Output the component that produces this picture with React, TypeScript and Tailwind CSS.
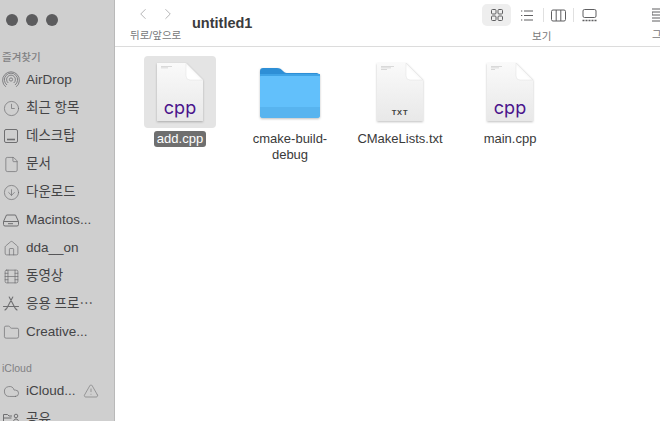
import { ChevronLeft, ChevronRight, Clock3, Cloud, File, Folder, House, TriangleAlert, CircleArrowDown, Film, type LucideIcon } from 'lucide-react';
import type { ReactNode } from 'react';

const font = { fontFamily: '"Liberation Sans", "Noto Sans CJK KR", sans-serif' };

function AirDropIcon() {
  return (
    <svg width="18" height="18" viewBox="0 0 18 18" fill="none" stroke="#77777a" strokeWidth="0.9">
      <circle cx="9" cy="8.5" r="1.6" />
      <path d="M6.3 12a4.4 4.4 0 1 1 5.4 0" />
      <path d="M5 14a6.6 6.6 0 1 1 8 0" />
      <path d="M3.8 15.8a8.4 8.4 0 1 1 10.4 0" />
    </svg>
  );
}

function DesktopIcon() {
  return (
    <svg width="18" height="18" viewBox="0 0 18 18" fill="none" stroke="#6f6f71" strokeWidth="1">
      <rect x="2.5" y="2.5" width="13" height="13" rx="1.5" />
      <path d="M5 12.5h8" strokeWidth="1.6" />
    </svg>
  );
}

function DiskIcon() {
  return (
    <svg width="18" height="18" viewBox="0 0 18 18" fill="none" stroke="#6f6f71" strokeWidth="1">
      <path d="M1.5 10.5 4.5 4h9l3 6.5v3a1.5 1.5 0 0 1-1.5 1.5H3a1.5 1.5 0 0 1-1.5-1.5z" />
      <path d="M1.5 10.5h15M6 12.7h5" />
    </svg>
  );
}

function AppsIcon() {
  return (
    <svg width="18" height="18" viewBox="0 0 18 18" fill="none" stroke="#6f6f71" strokeWidth="1.1" strokeLinecap="round">
      <path d="M10.8 2 4.4 14M7.2 2l6.4 12M1.5 11.5h15M3 15l1-1M15 15l-1-1" />
    </svg>
  );
}

function SharedIcon() {
  return (
    <svg width="18" height="18" viewBox="0 0 18 18" fill="none" stroke="#6f6f71" strokeWidth="1">
      <path d="M1.5 15V4.5h4l1.5 1.5h3M1.5 8h8M1.5 15h9" />
      <circle cx="14" cy="6" r="1.8" />
      <path d="M11.5 12c0-2 1-3 2.5-3s2.5 1 2.5 3z" />
    </svg>
  );
}

function lucide(Icon: LucideIcon) {
  return <Icon size={17} strokeWidth={1} color="#6f6f71" />;
}

function SidebarRow({ icon, label, trailing }: { icon: ReactNode; label: string; trailing?: ReactNode }) {
  return (
    <div className="flex h-7 shrink-0 items-center pl-[2px]">
      <span className="flex w-[18px] shrink-0 justify-center">{icon}</span>
      <span className="ml-[6px] whitespace-nowrap text-[13.5px] text-[#444446]">{label}</span>
      {trailing}
    </div>
  );
}

function Sidebar() {
  return (
    <aside className="flex h-[421px] w-[115px] shrink-0 flex-col overflow-hidden border-r border-[#b9b9b9] bg-[#cfcfcf]">
      <div className="flex shrink-0 gap-[8px] pl-[6px] pt-[14px]">
        <span className="h-3 w-3 rounded-full bg-[#5c5c5e]" />
        <span className="h-3 w-3 rounded-full bg-[#5c5c5e]" />
        <span className="h-3 w-3 rounded-full bg-[#5c5c5e]" />
      </div>
      <p className="mt-[24px] shrink-0 pl-[2px] text-[10.5px] leading-[14px] font-medium text-[#818183]">즐겨찾기</p>
      <div className="mt-[2px] flex shrink-0 flex-col">
        <SidebarRow icon={<AirDropIcon />} label="AirDrop" />
        <SidebarRow icon={lucide(Clock3)} label="최근 항목" />
        <SidebarRow icon={<DesktopIcon />} label="데스크탑" />
        <SidebarRow icon={lucide(File)} label="문서" />
        <SidebarRow icon={lucide(CircleArrowDown)} label="다운로드" />
        <SidebarRow icon={<DiskIcon />} label="Macintos..." />
        <SidebarRow icon={lucide(House)} label="dda__on" />
        <SidebarRow icon={lucide(Film)} label="동영상" />
        <SidebarRow icon={<AppsIcon />} label="응용 프로⋯" />
        <SidebarRow icon={lucide(Folder)} label="Creative..." />
      </div>
      <p className="mt-[15px] shrink-0 pl-[2px] text-[10.5px] leading-[14px] font-medium text-[#818183]">iCloud</p>
      <div className="mt-[2px] flex shrink-0 flex-col">
        <SidebarRow
          icon={lucide(Cloud)}
          label="iCloud..."
          trailing={
            <span className="ml-[7px]">
              <TriangleAlert size={16} strokeWidth={0.9} color="#6f6f71" />
            </span>
          }
        />
        <SidebarRow icon={<SharedIcon />} label="공유" />
      </div>
    </aside>
  );
}

function ViewButtons() {
  return (
    <div className="flex items-center">
      <span className="flex h-[22px] w-[29px] shrink-0 items-center justify-center rounded-[5px] bg-[#eeeeee]">
        <svg width="14" height="14" viewBox="0 0 14 14" fill="none" stroke="#5f5f61" strokeWidth="1">
          <rect x="1.5" y="1.5" width="4.5" height="4.5" rx="1" />
          <rect x="8" y="1.5" width="4.5" height="4.5" rx="1" />
          <rect x="1.5" y="8" width="4.5" height="4.5" rx="1" />
          <rect x="8" y="8" width="4.5" height="4.5" rx="1" />
        </svg>
      </span>
      <span className="ml-[10px] flex w-[12px] shrink-0 justify-center">
        <svg width="12" height="11" viewBox="0 0 12 11" fill="none" stroke="#5f5f61" strokeWidth="1">
          <path d="M3 1H12M3 5.5H12M3 10H12M0 1h1.3M0 5.5h1.3M0 10h1.3" />
        </svg>
      </span>
      <span className="ml-[10px] h-[14px] w-px shrink-0 bg-[#e0e0e0]" />
      <span className="ml-[7px] flex shrink-0">
        <svg width="15" height="13" viewBox="0 0 15 13" fill="none" stroke="#5f5f61" strokeWidth="1">
          <rect x="0.5" y="1" width="14" height="11" rx="1.5" />
          <path d="M5.2 1v11M9.8 1v11" />
        </svg>
      </span>
      <span className="ml-[7px] h-[14px] w-px shrink-0 bg-[#e0e0e0]" />
      <span className="ml-[8px] flex shrink-0">
        <svg width="15" height="13" viewBox="0 0 15 13" fill="none" stroke="#5f5f61" strokeWidth="1">
          <rect x="1" y="0.5" width="13" height="8" rx="1.5" />
          <path d="M0.5 11.5h14" strokeWidth="1.4" strokeDasharray="2 1" />
        </svg>
      </span>
    </div>
  );
}

function Toolbar() {
  return (
    <header className="flex h-[47px] shrink-0 border-b border-[#dcdcdc] bg-white">
      <div className="ml-[15px] flex w-[62px] shrink-0 flex-col">
        <div className="mt-[5px] flex h-[18px] items-center pl-[4px]">
          <ChevronLeft size={18} strokeWidth={1} color="#9c9c9e" />
          <ChevronRight size={18} strokeWidth={1} color="#9c9c9e" className="ml-[7px]" />
        </div>
        <span className="mt-[5px] whitespace-nowrap text-[10.5px] leading-[14px] text-[#777779]">뒤로/앞으로</span>
      </div>
      <h1 className="w-[60px] shrink-0 pt-[14px] text-[14.5px] leading-[18px] font-bold text-[#3b3b3d]">untitled1</h1>
      <div className="ml-[230px] flex w-[120px] shrink-0 flex-col pt-[4px]">
        <ViewButtons />
        <span className="mt-[3px] pl-[50px] text-[10.5px] leading-[14px] text-[#777779]">보기</span>
      </div>
      <div className="ml-[50px] flex shrink-0 flex-col pt-[8px]">
        <svg width="14" height="14" viewBox="0 0 14 14" fill="none" stroke="#5f5f61" strokeWidth="1" className="shrink-0">
          <path d="M0 1h14M0 4h14v3H0zM0 10h14M0 13h14" />
        </svg>
        <span className="mt-[5px] text-[10.5px] leading-[14px] text-[#777779]">그</span>
      </div>
    </header>
  );
}

function DocIcon({ lines }: { lines: number[] }) {
  return (
    <svg width="48" height="60" viewBox="0 0 48 60" className="drop-shadow-[0_1px_1px_rgba(0,0,0,0.25)]">
      <defs>
        <linearGradient id="page" x1="0" y1="0" x2="0" y2="1">
          <stop offset="0" stopColor="#fafafa" />
          <stop offset="1" stopColor="#e8e8e8" />
        </linearGradient>
        <linearGradient id="fold" x1="0" y1="1" x2="1" y2="0">
          <stop offset="0.4" stopColor="#ffffff" />
          <stop offset="1" stopColor="#d2d2d2" />
        </linearGradient>
      </defs>
      <path d="M1 1h29l17 17v41H1z" fill="url(#page)" />
      <path d="M30 1l17 17H34a4 4 0 0 1-4-4z" fill="url(#fold)" stroke="#d8d8d8" strokeWidth="0.4" />
      {lines.map((w, i) => (
        <rect key={i} x="5" y={4 + i * 1.6} width={w} height="0.6" fill="#c4c4c4" />
      ))}
    </svg>
  );
}

function FileItem({ kind, name, selected, lines }: { kind: 'cpp' | 'txt'; name: string; selected?: boolean; lines: number[] }) {
  return (
    <div className="flex w-[110px] shrink-0 flex-col items-center">
      <div className={`relative flex h-[72px] w-[72px] items-center justify-center rounded-[4px] ${selected ? 'bg-[#e4e4e4]' : ''}`}>
        <DocIcon lines={lines} />
        {kind === 'cpp' ? (
          <span className="absolute left-0 right-0 top-[42px] text-center text-[18px] leading-[20px] font-normal text-[#4a148c]" style={{ fontFamily: '"Inter", sans-serif' }}>cpp</span>
        ) : (
          <span className="absolute left-0 right-0 top-[52px] text-center text-[7.5px] leading-[10px] font-bold tracking-[0.8px] text-[#3f3f3f]">TXT</span>
        )}
      </div>
      <span className={`mt-[3px] rounded-[3px] px-[3px] text-center text-[13px] leading-[16px] ${selected ? 'bg-[#6f6f6f] text-white' : 'text-[#3a3a3a]'}`}>{name}</span>
    </div>
  );
}

function FolderItem() {
  return (
    <div className="flex w-[110px] shrink-0 flex-col items-center">
      <div className="flex h-[72px] w-[72px] items-center justify-center">
        <svg width="62" height="54" viewBox="0 0 62 54" className="drop-shadow-[0_1px_1px_rgba(0,0,0,0.25)]">
          <path d="M1 6a3 3 0 0 1 3-3h14c3 0 4 1 6 3 2 2 3 2 5 2h29a4 4 0 0 1 3 3v6H1z" fill="#2e8fd6" />
          <rect x="1" y="9" width="60" height="44" rx="3" fill="#62c0fb" />
          <rect x="1" y="9" width="60" height="2" fill="#3fa3e6" />
          <path d="M1 42h60v8a3 3 0 0 1-3 3H4a3 3 0 0 1-3-3z" fill="#58b4ef" />
        </svg>
      </div>
      <span className="mt-[3px] w-[80px] text-center text-[13px] leading-[16px] text-[#3a3a3a]">cmake-build-debug</span>
    </div>
  );
}

export default function App() {
  return (
    <div className="flex h-[421px] w-[660px] overflow-hidden bg-white" style={font}>
      <Sidebar />
      <main className="flex min-w-0 flex-1 flex-col overflow-hidden">
        <Toolbar />
        <section className="flex pl-[10px] pt-[9px]">
          <FileItem kind="cpp" name="add.cpp" selected lines={[11, 7]} />
          <FolderItem />
          <FileItem kind="txt" name="CMakeLists.txt" lines={[13, 10, 6]} />
          <FileItem kind="cpp" name="main.cpp" lines={[11, 8, 4]} />
        </section>
      </main>
    </div>
  );
}
